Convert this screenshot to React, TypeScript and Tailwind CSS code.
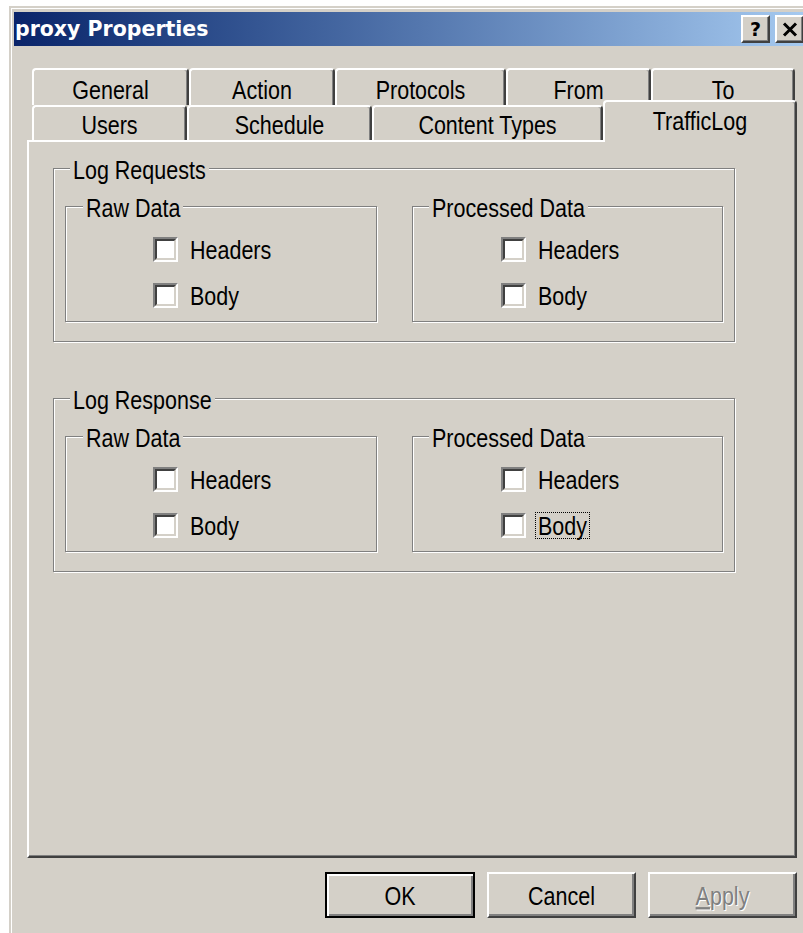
import type { ReactNode } from 'react';

// Classic Win2000 property sheet: "proxy Properties" / TrafficLog page

const topTabs = [
  { label: 'General', w: 'w-[157px]' },
  { label: 'Action', w: 'w-[146px]' },
  { label: 'Protocols', w: 'w-[171px]' },
  { label: 'From', w: 'w-[145px]' },
  { label: 'To', w: 'w-[144px]' },
];

const bottomTabs = [
  { label: 'Users', w: 'w-[155px]' },
  { label: 'Schedule', w: 'w-[185px]' },
  { label: 'Content Types', w: 'w-[231px]' },
];

// the dialog font is a tall, narrow sans; stretch Liberation Sans vertically
function Txt({ children }: { children: ReactNode }) {
  return <span className="inline-block translate-y-[1.5px] scale-y-[1.18]">{children}</span>;
}

function Tab({ label, className }: { label: string; className: string }) {
  return (
    <div
      className={`flex items-center justify-center rounded-t-[4px] border-l-2 border-t-2 border-r-2 border-l-white border-t-white border-r-[#404040] shadow-[inset_-1px_0_0_#808080] ${className}`}
    >
      <Txt>{label}</Txt>
    </div>
  );
}

function CheckBox() {
  return (
    <span className="block h-[25px] w-[25px] shrink-0 border-2 border-t-[#808080] border-l-[#808080] border-b-white border-r-white">
      <span className="block h-full w-full border-2 border-t-[#404040] border-l-[#404040] border-b-[#d4d0c8] border-r-[#d4d0c8] bg-white" />
    </span>
  );
}

function CheckRow({ label, focused }: { label: string; focused?: boolean }) {
  return (
    <div className="flex h-[25px] items-center">
      <CheckBox />
      <span
        className={`ml-[9px] border px-[2px] leading-[25px] ${
          focused ? 'border-dotted border-black' : 'border-transparent'
        }`}
      >
        <Txt>{label}</Txt>
      </span>
    </div>
  );
}

function GroupBox({
  title,
  className,
  labelClass,
  children,
}: {
  title: string;
  className: string;
  labelClass: string;
  children: ReactNode;
}) {
  return (
    <div
      className={`relative border border-[#808080] shadow-[inset_1px_1px_0_#fff,1px_1px_0_#fff] ${className}`}
    >
      <span
        className={`absolute top-[-12px] bg-[#d4d0c8] px-[3px] leading-[24px] ${labelClass}`}
      >
        <Txt>{title}</Txt>
      </span>
      {children}
    </div>
  );
}

function DataBox({ title, wide, focusBody }: { title: string; wide?: boolean; focusBody?: boolean }) {
  return (
    <GroupBox
      title={title}
      labelClass={wide ? 'left-[17px]' : 'left-[16px]'}
      className={`flex h-[116px] flex-col gap-[21px] pt-[30px] ${
        wide ? 'w-[312px] pl-[87px]' : 'w-[311px] pl-[88px]'
      }`}
    >
      <CheckRow label="Headers" />
      <CheckRow label="Body" focused={focusBody} />
    </GroupBox>
  );
}

function LogGroup({ title, focusBody, className }: { title: string; focusBody?: boolean; className?: string }) {
  return (
    <GroupBox
      title={title}
      labelClass="left-[16px]"
      className={`flex h-[174px] w-[682px] gap-[35px] pl-[11px] pt-[37px] ${className ?? ''}`}
    >
      <DataBox title="Raw Data" wide />
      <DataBox title="Processed Data" focusBody={focusBody} />
    </GroupBox>
  );
}

function DialogButton({ children, isDefault }: { children: ReactNode; isDefault?: boolean }) {
  return (
    <div
      className={`flex h-[46px] items-center justify-center ${
        isDefault
          ? 'w-[150px] border-2 border-black shadow-[inset_2px_2px_0_#fff,inset_-2px_-2px_0_#808080]'
          : 'w-[149px] border-l-2 border-t-2 border-r-2 border-b-2 border-l-white border-t-white border-r-[#404040] border-b-[#404040] shadow-[inset_-2px_-2px_0_#808080]'
      }`}
    >
      {children}
    </div>
  );
}

function CaptionButton({ children }: { children: ReactNode }) {
  return (
    <div className="flex h-[28px] w-[29px] items-center justify-center border-l-2 border-t-2 border-r-2 border-b-2 border-l-white border-t-white border-r-[#404040] border-b-[#404040] bg-[#d4d0c8] shadow-[inset_-1px_-1px_0_#808080]">
      {children}
    </div>
  );
}

export default function App() {
  return (
    <div className="h-[933px] w-[803px] overflow-hidden bg-white pl-[9px] pt-[6px] font-['Liberation_Sans',Arial,sans-serif] text-[21.5px] text-black">
      <div className="h-[927px] w-[800px] bg-[#d4d0c8] pl-[2px] pt-[2px]">
        <div className="h-full border-l border-t border-white pl-[2px] pt-[3px]">
          {/* caption */}
          <div className="flex h-[34px] w-[792px] items-center justify-between bg-linear-to-r from-[#0a246a] to-[#a6caf0] pl-[1px] pr-[2px]">
            <span className="font-['DejaVu_Sans',sans-serif] text-[20.5px] font-bold leading-none text-white">
              proxy Properties
            </span>
            <div className="flex gap-[5px]">
              <CaptionButton>
                <span className="font-['DejaVu_Sans',sans-serif] text-[19px] font-bold leading-none">?</span>
              </CaptionButton>
              <CaptionButton>
                <svg width="16" height="15" viewBox="0 0 16 15">
                  <path d="M2 1.5 L14 13.5 M14 1.5 L2 13.5" stroke="#000" strokeWidth="3" />
                </svg>
              </CaptionButton>
            </div>
          </div>

          {/* property sheet */}
          <div className="ml-[13px] mt-[22px] w-[770px]">
            <div className="flex h-[37px] pl-[5px]">
              {topTabs.map((t) => (
                <Tab key={t.label} label={t.label} className={`${t.w} h-[37px] pt-[3px]`} />
              ))}
            </div>
            <div className="flex h-[35px] items-end pl-[5px]">
              {bottomTabs.map((t) => (
                <Tab key={t.label} label={t.label} className={`${t.w} h-[35px] pt-[2px]`} />
              ))}
              <Tab
                label="TrafficLog"
                className="relative z-10 mb-[-2px] h-[42px] w-[194px] bg-[#d4d0c8] pb-[4px]"
              />
            </div>

            <div className="h-[718px] border-l-2 border-t-2 border-r-2 border-b-2 border-l-white border-t-white border-r-[#404040] border-b-[#404040] pl-[24px] pt-[26px] shadow-[inset_-1px_-1px_0_#808080]">
              <LogGroup title="Log Requests" />
              <LogGroup title="Log Response" focusBody className="mt-[56px]" />
            </div>

            <div className="mt-[14px] flex justify-end gap-[12px]">
              <DialogButton isDefault>
                <Txt>OK</Txt>
              </DialogButton>
              <DialogButton>
                <Txt>Cancel</Txt>
              </DialogButton>
              <DialogButton>
                <span className="inline-block translate-y-[1.5px] scale-y-[1.18] text-[#808080] [text-shadow:1px_1px_0_#fff]">
                  <span className="underline">A</span>pply
                </span>
              </DialogButton>
            </div>
          </div>
        </div>
      </div>
    </div>
  );
}
